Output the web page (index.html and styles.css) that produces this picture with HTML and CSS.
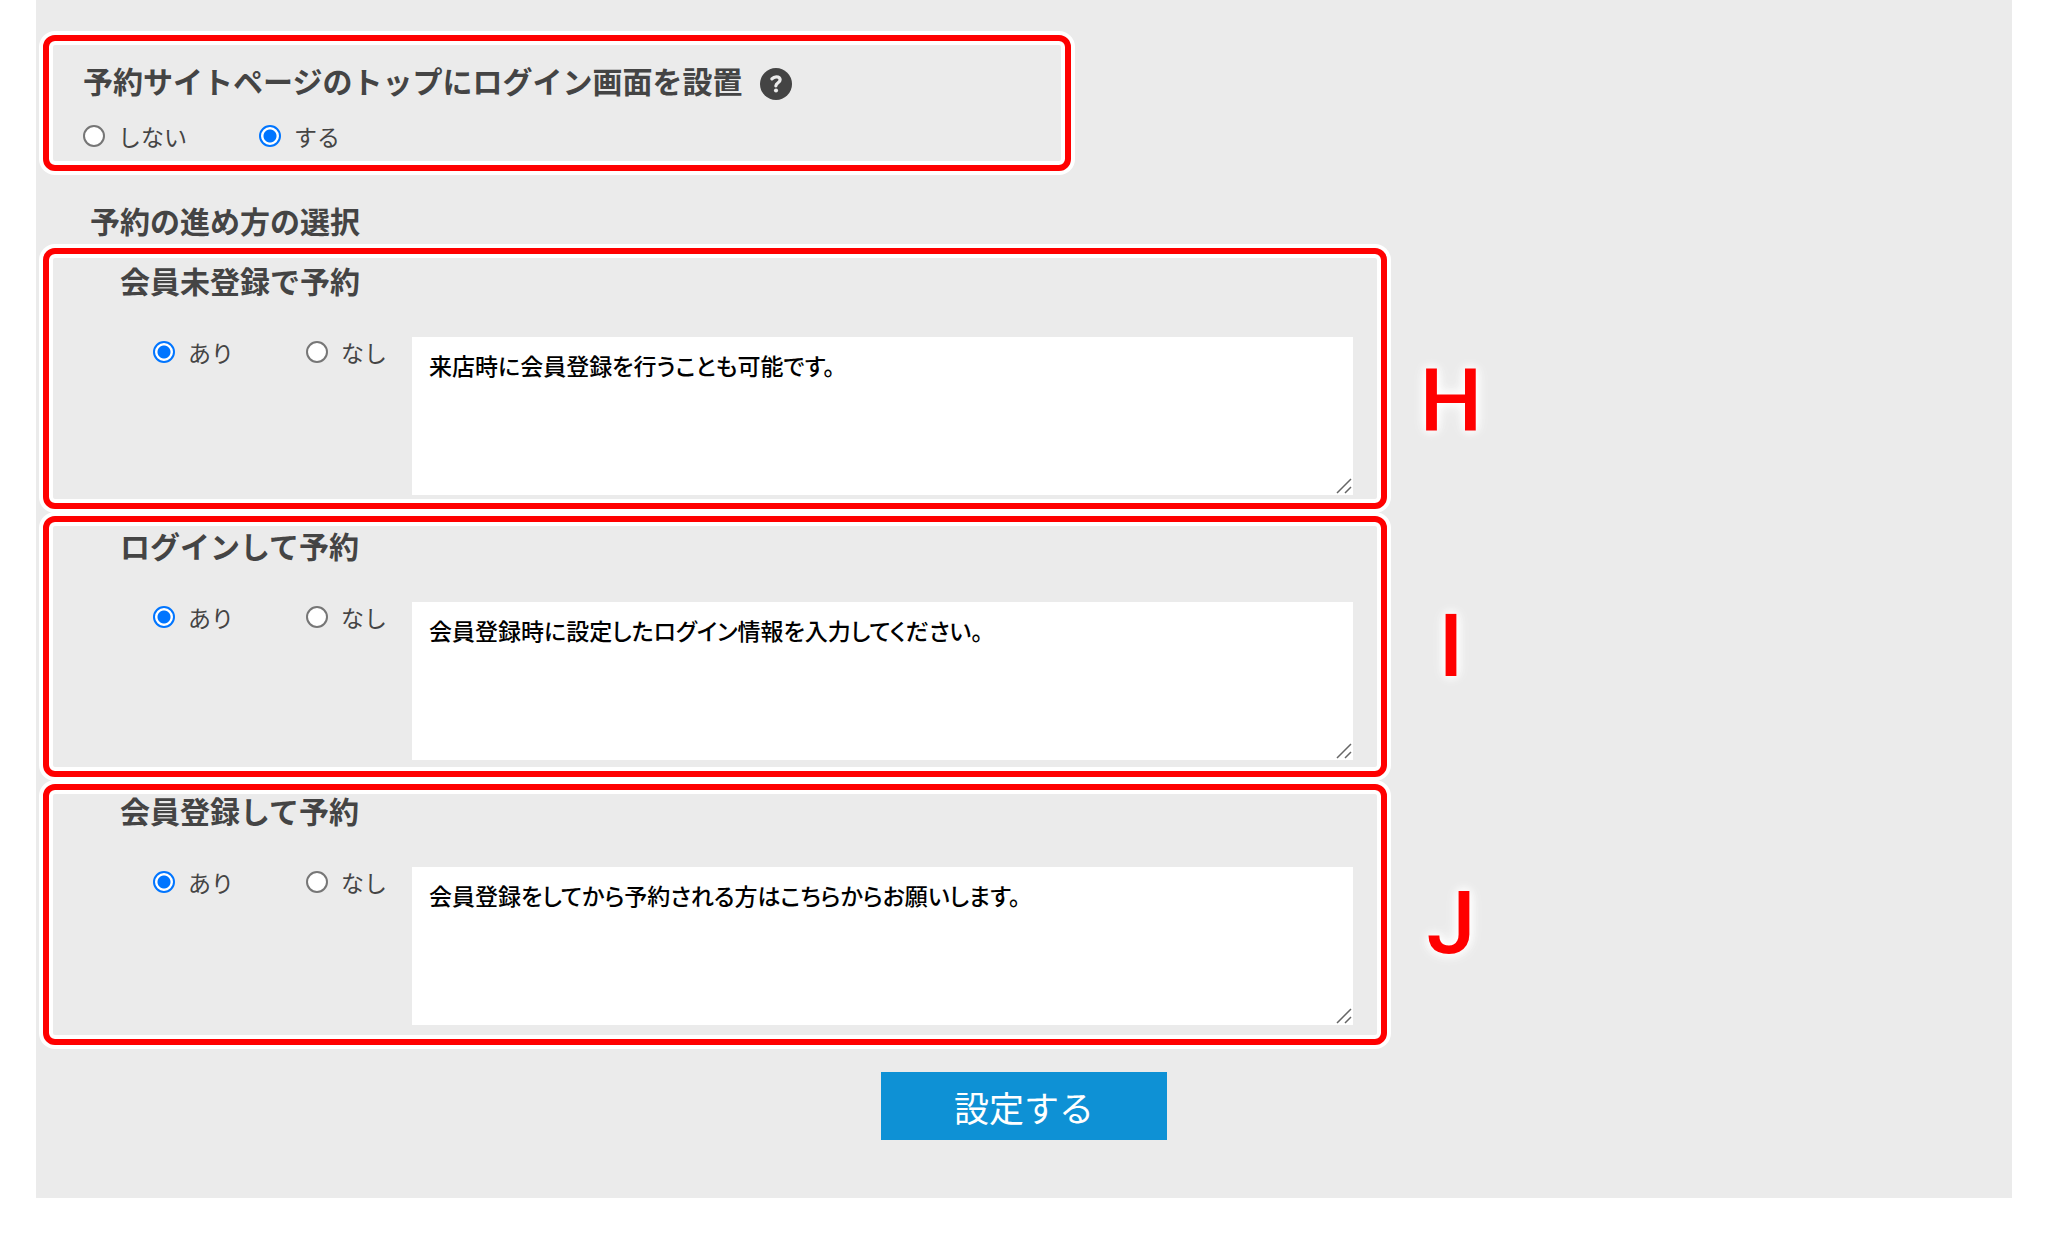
FILE: index.html
```html
<!DOCTYPE html>
<html lang="ja">
<head>
  <meta charset="UTF-8" />
  <meta name="viewport" content="width=device-width, initial-scale=1.0" />
  <title>予約サイト設定</title>
  <link rel="stylesheet" href="styles.css">
</head>
<body>
  <form class="panel">
    <section class="login-setting marker">
      <h2 class="title">
        予約サイトページのトップにログイン画面を設置
        <svg class="help-icon" viewBox="8 8 496 496" role="img" aria-label="ヘルプ">
          <circle cx="256" cy="256" r="248" fill="#444"/>
          <path fill="none" stroke="#ebebeb" stroke-width="50" stroke-linecap="round" stroke-linejoin="round" d="M192 176c22-24 42-32 68-32 38 0 60 20 60 48 0 46-62 44-66 92"/>
          <circle cx="256" cy="356" r="32" fill="#ebebeb"/>
        </svg>
      </h2>
      <div class="choices">
        <label class="choice"><input type="radio" name="login_top" value="0">しない</label>
        <label class="choice"><input type="radio" name="login_top" value="1" checked>する</label>
      </div>
    </section>

    <h2 class="title method-title">予約の進め方の選択</h2>

    <div class="methods">
      <section class="method">
        <h3 class="title">会員未登録で予約</h3>
        <div class="method-row">
          <label class="choice"><input type="radio" name="guest" value="1" checked>あり</label>
          <label class="choice"><input type="radio" name="guest" value="0">なし</label>
          <div class="text-box">
            <textarea name="guest_text" aria-label="会員未登録で予約の説明">来店時に会員登録を行うことも可能です。</textarea>
            <svg class="grip" viewBox="0 0 16 16"><path d="M1 15L15 1M9 15L15 9"/></svg>
          </div>
        </div>
      </section>

      <section class="method">
        <h3 class="title">ログインして予約</h3>
        <div class="method-row">
          <label class="choice"><input type="radio" name="login" value="1" checked>あり</label>
          <label class="choice"><input type="radio" name="login" value="0">なし</label>
          <div class="text-box">
            <textarea name="login_text" aria-label="ログインして予約の説明">会員登録時に設定したログイン情報を入力してください。</textarea>
            <svg class="grip" viewBox="0 0 16 16"><path d="M1 15L15 1M9 15L15 9"/></svg>
          </div>
        </div>
      </section>

      <section class="method">
        <h3 class="title">会員登録して予約</h3>
        <div class="method-row">
          <label class="choice"><input type="radio" name="register" value="1" checked>あり</label>
          <label class="choice"><input type="radio" name="register" value="0">なし</label>
          <div class="text-box">
            <textarea name="register_text" aria-label="会員登録して予約の説明">会員登録をしてから予約される方はこちらからお願いします。</textarea>
            <svg class="grip" viewBox="0 0 16 16"><path d="M1 15L15 1M9 15L15 9"/></svg>
          </div>
        </div>
      </section>

      <!-- red frames and letters over the three blocks -->
      <div class="marker-layer">
        <div class="marker"><span class="letter letter-h">H</span></div>
        <div class="marker"><span class="letter letter-i">I</span></div>
        <div class="marker"><span class="letter letter-j">J</span></div>
      </div>
    </div>

    <button type="submit" class="submit">設定する</button>
  </form>
</body>
</html>
```

FILE: styles.css
```css
* {
  box-sizing: border-box;
}
body {
  margin: 0;
  background-color: #fff;
  color: #444;
  font-family: "Noto Sans CJK JP", sans-serif;
  font-size: 23px;
}
.panel {
  margin: 0 36px;
  padding: 35px 7px 58px;
  background-color: #ebebeb;
}
.marker {
  border: 6px solid #f00;
  border-radius: 12px;
  box-shadow: 0 0 0 4px #fff, inset 0 0 0 4px #fff;
}
.title {
  display: flex;
  align-items: center;
  gap: 18px;
  margin: 0;
  font-size: 30px;
  font-weight: bold;
  line-height: 44px;
}
.help-icon {
  width: 32px;
  height: 32px;
  margin-top: 8px;
}

/* login screen setting */
.login-setting {
  max-width: 1028px;
  padding: 17px 34px 14px;
}
.choices {
  display: flex;
  margin-top: 19px;
}
.choice {
  display: flex;
  align-items: center;
  gap: 13px;
  height: 30px;
  line-height: 30px;
}
.choices .choice {
  width: 176px;
}
.choice input {
  appearance: none;
  width: 22px;
  height: 22px;
  margin: 0;
  border: 2px solid #767676;
  border-radius: 50%;
  background-color: #fff;
}
.choice input:checked {
  border-color: #0075ff;
  background: radial-gradient(circle, #0075ff 6px, #fff 7px);
}

/* reservation methods */
.method-title {
  margin: 27px 0 6px;
  padding-left: 47px;
}
.methods {
  position: relative;
  display: flex;
  flex-direction: column;
  gap: 28px;
  max-width: 1344px;
  padding: 10px 34px 20px 77px;
}
.method-row {
  display: grid;
  grid-template-columns: 153px 106px 1fr;
  margin-top: 35px;
  padding-left: 33px;
}
.text-box {
  position: relative;
}
textarea {
  display: block;
  width: 100%;
  height: 158px;
  padding: 12px 17px;
  border: none;
  background-color: #fff;
  color: #000;
  font-family: inherit;
  font-size: 23px;
  font-weight: 500;
  font-feature-settings: "palt";
  line-height: 32px;
}
textarea::-webkit-resizer {
  background-color: #fff;
}
.grip {
  position: absolute;
  right: 1px;
  bottom: 1px;
  width: 16px;
  height: 16px;
  fill: none;
  stroke: #666;
  stroke-width: 1.5;
  pointer-events: none;
}
.marker-layer {
  position: absolute;
  inset: 0;
  display: flex;
  flex-direction: column;
  gap: 7px;
  pointer-events: none;
}
.marker-layer .marker {
  position: relative;
  flex: 1;
}
.letter {
  position: absolute;
  left: 100%;
  width: 140px;
  color: #f00;
  font-family: Roboto, sans-serif;
  font-size: 88px;
  font-weight: 500;
  line-height: 88px;
  text-align: center;
  text-shadow: 0 0 8px #fff, 0 0 12px #fff, 0 0 16px #fff;
}
.letter-h {
  top: 103px;
}
.letter-i {
  top: 80px;
}
.letter-j {
  top: 89px;
}

.submit {
  display: block;
  width: 286px;
  height: 68px;
  margin: 27px auto 0;
  padding: 2px 0 0;
  border: none;
  background-color: #0e91d5;
  color: #fff;
  font-family: inherit;
  font-size: 35px;
  line-height: 64px;
  cursor: pointer;
}
```
